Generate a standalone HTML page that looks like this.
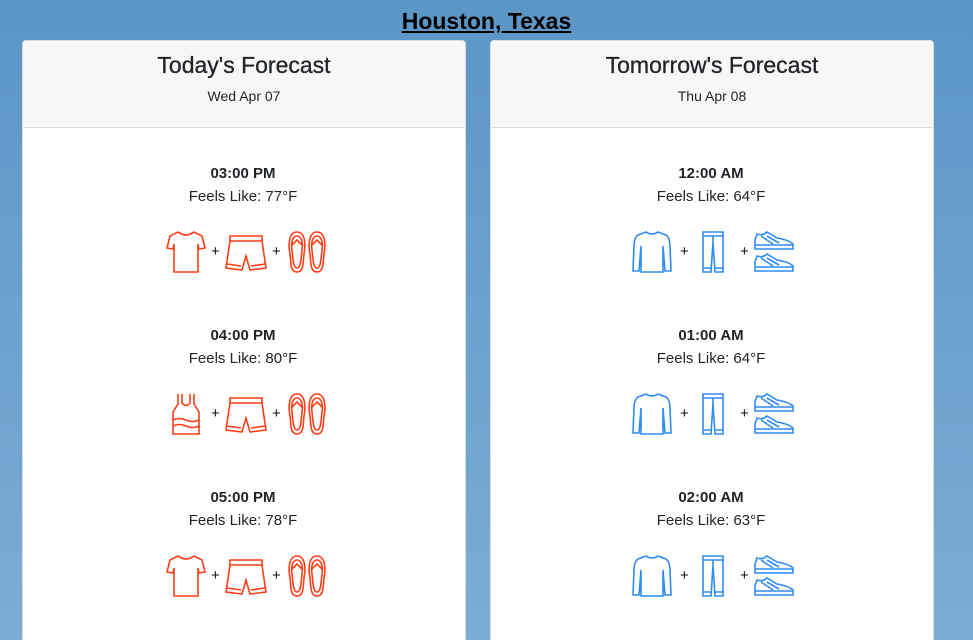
<!DOCTYPE html>
<html style="overflow:hidden;height:640px"><head><meta charset="utf-8"><style>
html,body{margin:0;width:973px;height:640px;overflow:hidden}
body{background:linear-gradient(#5b96c6,#7badd6);font-family:"Liberation Sans",sans-serif;color:#212529;position:relative}
h1{position:absolute;top:7px;left:0;width:973px;text-align:center;margin:0;font-size:23px;font-weight:bold;color:#000;text-decoration:underline;line-height:28px}
.card{position:absolute;top:40px;width:442px;height:610px;background:#fff;border:1px solid #ddd;border-radius:4px;overflow:hidden}
.hd{height:86px;background:#f7f7f7;border-bottom:1px solid #ddd;text-align:center}
.hd .t{font-size:23px;padding-top:11px;line-height:26px;-webkit-text-stroke:0.3px #212529}
.hd .d{font-size:14px;margin-top:10px}
.s{position:absolute;left:0;width:442px;text-align:center}
.tm{font-weight:bold;font-size:15px}
.fl{font-size:15px;margin-top:6px}
svg{position:absolute}
.p{position:absolute;font-size:15px;color:#111}
</style></head><body>
<h1>Houston, Texas</h1>
<div class="card" style="left:22px"><div class="hd"><div class="t">Today's Forecast</div><div class="d">Wed Apr 07</div></div></div>
<div class="card" style="left:490px"><div class="hd"><div class="t">Tomorrow's Forecast</div><div class="d">Thu Apr 08</div></div></div>
<svg width="0" height="0"><defs>
<g id="shirt" fill="none" stroke="#ff3d17" stroke-width="1.6"><path d="M12 2 L4 6 L1 18 L7 19 L8 14 L8 42 L32 42 L32 14 L33 19 L39 18 L36 6 L28 2 Q20 8 12 2Z M14 3 Q20 7 26 3"/></g>
<g id="tank" fill="none" stroke="#ff3d17" stroke-width="1.6"><path d="M10 2 L10 12 L5 20 L5 42 L31 42 L31 20 L26 12 L26 2 M14 2 L14 11 Q18 16 22 11 L22 2 M5 28 Q11 25 18 28 T31 28 M5 34 Q11 31 18 34 T31 34"/></g>
<g id="shorts" fill="none" stroke="#ff3d17" stroke-width="1.6"><path d="M6 2 L38 2 L38 7 L42 34 L26 36 L22 22 L18 36 L2 34 L6 7Z M6 7 L38 7 M3 30 L17 32 M27 32 L41 30"/></g>
<g id="flip" fill="none" stroke="#ff3d17" stroke-width="1.6"><path d="M10 2 C2 2 1 14 3 24 C4 32 3 42 10 42 C17 42 16 32 17 24 C19 14 18 2 10 2Z M10 6 C5 6 4 14 5 20 C6 28 6 38 10 38 C14 38 14 28 15 20 C16 14 15 6 10 6Z M4 16 L10 10 L16 16"/><path transform="translate(20,0)" d="M10 2 C2 2 1 14 3 24 C4 32 3 42 10 42 C17 42 16 32 17 24 C19 14 18 2 10 2Z M10 6 C5 6 4 14 5 20 C6 28 6 38 10 38 C14 38 14 28 15 20 C16 14 15 6 10 6Z M4 16 L10 10 L16 16"/></g>
<g id="sweat" fill="none" stroke="#2f8cf0" stroke-width="1.6"><path d="M14 2 L6 5 Q2 8 2 16 L1 41 L7 41 L9 16 L9 42 L31 42 L31 16 L33 41 L39 41 L38 16 Q38 8 34 5 L26 2 Q20 6 14 2Z"/></g>
<g id="pants" fill="none" stroke="#2f8cf0" stroke-width="1.6"><path d="M2 2 L22 2 L22 42 L14 42 L12 12 L10 42 L2 42Z M2 6 L22 6 M12 6 L12 12 M2 38 L10 38 M14 38 L22 38"/></g>
<g id="shoe" fill="none" stroke="#2f8cf0" stroke-width="1.6"><path d="M2 10 L4 4 Q10 6 14 2 L24 8 Q36 10 40 14 L40 19 L2 19Z M2 15 L40 15 M8 6 L20 14 M14 6 L26 13"/></g>
</defs></svg>
<div id="c"></div>
<script>
var h='';
var L=[['03:00 PM','77','shirt'],['04:00 PM','80','tank'],['05:00 PM','78','shirt']];
var R=[['12:00 AM','64'],['01:00 AM','64'],['02:00 AM','63']];
for(var i=0;i<3;i++){var y=165+i*162;
h+='<div class="s" style="left:22px;top:'+y+'px"><div class="tm">'+L[i][0]+'</div><div class="fl">Feels Like: '+L[i][1]+'°F</div></div>';
h+='<div class="s" style="left:490px;top:'+y+'px"><div class="tm">'+R[i][0]+'</div><div class="fl">Feels Like: '+R[i][1]+'°F</div></div>';
var iy=y+65;
h+='<svg style="left:'+(L[i][2]=='tank'?168:166)+'px;top:'+iy+'px" width="42" height="44"><use href="#'+L[i][2]+'"/></svg>';
h+='<div class="p" style="left:211px;top:'+(iy+13)+'px">+</div>';
h+='<svg style="left:224px;top:'+(iy+4)+'px" width="44" height="40"><use href="#shorts"/></svg>';
h+='<div class="p" style="left:272px;top:'+(iy+13)+'px">+</div>';
h+='<svg style="left:287px;top:'+iy+'px" width="42" height="44"><use href="#flip"/></svg>';
h+='<svg style="left:632px;top:'+iy+'px" width="42" height="44"><use href="#sweat"/></svg>';
h+='<div class="p" style="left:680px;top:'+(iy+13)+'px">+</div>';
h+='<svg style="left:701px;top:'+iy+'px" width="26" height="44"><use href="#pants"/></svg>';
h+='<div class="p" style="left:740px;top:'+(iy+13)+'px">+</div>';
h+='<svg style="left:753px;top:'+iy+'px" width="44" height="22"><use href="#shoe"/></svg>';
h+='<svg style="left:753px;top:'+(iy+22)+'px" width="44" height="22"><use href="#shoe"/></svg>';
}
document.getElementById('c').innerHTML=h;
</script>
</body></html>
